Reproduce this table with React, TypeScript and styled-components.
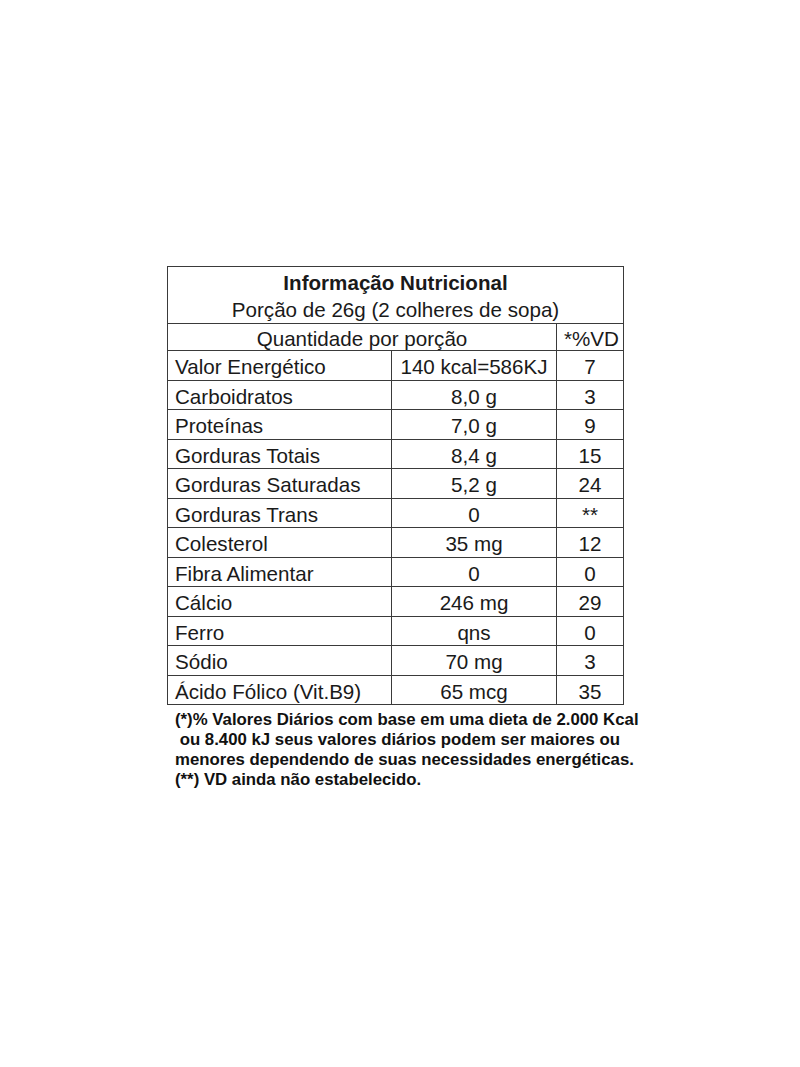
import React from "react";
import styled, { createGlobalStyle } from "styled-components";

const GlobalStyle = createGlobalStyle`
  html, body {
    margin: 0;
    padding: 0;
    background: #ffffff;
  }
  body {
    font-family: "Liberation Sans", Arial, sans-serif;
    color: #111;
  }
`;

type Row = { name: string; amount: string; vd: string };

const rows: Row[] = [
  { name: "Valor Energético", amount: "140 kcal=586KJ", vd: "7" },
  { name: "Carboidratos", amount: "8,0 g", vd: "3" },
  { name: "Proteínas", amount: "7,0 g", vd: "9" },
  { name: "Gorduras Totais", amount: "8,4 g", vd: "15" },
  { name: "Gorduras Saturadas", amount: "5,2 g", vd: "24" },
  { name: "Gorduras Trans", amount: "0", vd: "**" },
  { name: "Colesterol", amount: "35 mg", vd: "12" },
  { name: "Fibra Alimentar", amount: "0", vd: "0" },
  { name: "Cálcio", amount: "246 mg", vd: "29" },
  { name: "Ferro", amount: "qns", vd: "0" },
  { name: "Sódio", amount: "70 mg", vd: "3" },
  { name: "Ácido Fólico (Vit.B9)", amount: "65 mcg", vd: "35" },
];

const App: React.FC = () => {
  return (
    <Page>
      <GlobalStyle />
      <Label>
        <Table>
          <colgroup>
            <col style={{ width: 224 }} />
            <col style={{ width: 165 }} />
            <col style={{ width: 67 }} />
          </colgroup>
          <tbody>
            <tr>
              <TitleCell colSpan={3}>
                <Title>Informação Nutricional</Title>
                <Subtitle>Porção de 26g (2 colheres de sopa)</Subtitle>
              </TitleCell>
            </tr>
            <HeadRow>
              <Cell colSpan={2} $align="center">
                Quantidade por porção
              </Cell>
              <Cell $align="center">*%VD</Cell>
            </HeadRow>
            {rows.map((r) => (
              <BodyRow key={r.name}>
                <Cell $align="left">{r.name}</Cell>
                <Cell $align="center">{r.amount}</Cell>
                <Cell $align="center">{r.vd}</Cell>
              </BodyRow>
            ))}
          </tbody>
        </Table>
        <Notes>
          <Note>(*)% Valores Diários com base em uma dieta de 2.000 Kcal</Note>
          <Note> ou 8.400 kJ seus valores diários podem ser maiores ou</Note>
          <Note>menores dependendo de suas necessidades energéticas.</Note>
          <Note>(**) VD ainda não estabelecido.</Note>
        </Notes>
      </Label>
    </Page>
  );
};

const Page = styled.div`
  width: 800px;
  height: 1067px;
  box-sizing: border-box;
  padding: 266px 0 0 167px;
`;

const Label = styled.div`
  display: flex;
  flex-direction: column;
  width: 457px;
`;

const Table = styled.table`
  border-collapse: collapse;
  table-layout: fixed;
  width: 457px;
  font-size: 20.6px;
  color: #1a1a1a;
`;

const TitleCell = styled.td`
  border: 1px solid #3a3a3a;
  height: 56px;
  padding: 0;
  text-align: center;
  vertical-align: top;
`;

const Title = styled.div`
  font-weight: bold;
  line-height: 28px;
  padding-top: 2px;
`;

const Subtitle = styled.div`
  line-height: 26px;
`;

const HeadRow = styled.tr`
  height: 27px;
`;

const BodyRow = styled.tr`
  height: 29.5px;
`;

const Cell = styled.td<{ $align: "left" | "center" }>`
  border: 1px solid #3a3a3a;
  padding: 4px 7px 0;
  line-height: 22px;
  text-align: ${(p) => p.$align};
  white-space: nowrap;
  vertical-align: middle;
`;

const Notes = styled.div`
  display: flex;
  flex-direction: column;
  padding: 5px 0 0 8px;
`;

const Note = styled.div`
  font-weight: bold;
  font-size: 16.8px;
  line-height: 20px;
  white-space: pre;
  color: #111;
`;

export default App;
